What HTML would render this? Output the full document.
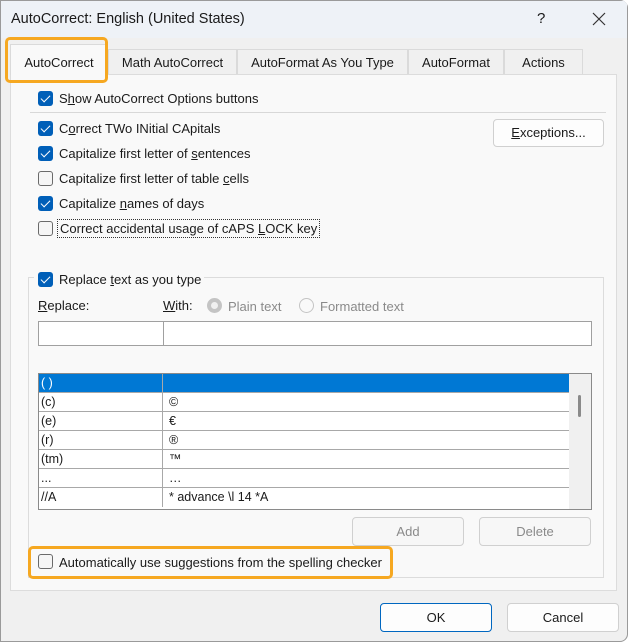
<!DOCTYPE html>
<html><head><style>
*{box-sizing:border-box;margin:0;padding:0}
body{width:630px;height:643px;background:#fff;font-family:"Liberation Sans",sans-serif;font-size:12.5px;color:#1a1a1a;position:relative;overflow:hidden}
.win{position:absolute;left:0;top:0;width:628px;height:642px;background:#f0f0f0;box-shadow:inset 0 0 0 1px #9a9a9a;border-radius:0 8px 8px 0;overflow:hidden}
.title{position:absolute;left:1px;top:1px;width:626px;height:37px;background:#eef2f7}
.abs{position:absolute}
.tab{position:absolute;top:49px;height:26px;border:1px solid #dadada;border-bottom:none;background:#f0f0f0;text-align:center;line-height:26px;font-size:13px}
.panel{position:absolute;left:10px;top:74px;width:607px;height:517px;background:#f9f9f9;border:1px solid #dcdcdc}
.cb{position:absolute;width:15px;height:15px;border-radius:3px;background:#005fb8}
.cb::after{content:"";position:absolute;left:5px;top:2px;width:4px;height:8px;border:solid #fff;border-width:0 1.5px 1.5px 0;transform:rotate(45deg)}
.cb.off{background:#f5f5f5;border:1px solid #6a6a6a}
.cb.off::after{display:none}
.lbl{position:absolute;font-size:13px;white-space:nowrap}
.btn{position:absolute;background:#fdfdfd;border:1px solid #d0d0d0;border-radius:4px;text-align:center;font-size:13px}
.row{position:absolute;left:39px;width:530px;height:19px;border-bottom:1px solid #a8a8a8;background:#fff;font-size:12.5px;line-height:18px}
.row span{position:absolute;left:2px}
.row b{position:absolute;left:130px;font-weight:normal}
.row::before{content:"";position:absolute;left:123px;top:0;height:19px;border-left:1px solid #a8a8a8}
u{text-decoration:underline}
</style></head><body>
<div class="win">
<div class="title"></div>
<div class="abs" style="left:11px;top:11px;font-size:14.5px">AutoCorrect: English (United States)</div>
<div class="abs" style="left:537px;top:10px;font-size:15px">?</div>
<svg class="abs" style="left:592px;top:12px" width="14" height="14"><path d="M1 1L13 13M13 1L1 13" stroke="#333" stroke-width="1.2"/></svg>

<div class="tab" style="left:108px;width:129px">Math AutoCorrect</div>
<div class="tab" style="left:237px;width:171px">AutoFormat As You Type</div>
<div class="tab" style="left:408px;width:96px">AutoFormat</div>
<div class="tab" style="left:504px;width:79px">Actions</div>
<div class="panel"></div>
<div class="tab" style="left:10px;top:44px;height:31px;width:98px;background:#f9f9f9;line-height:36px">AutoCorrect</div>
<div class="abs" style="left:5px;top:37px;width:103px;height:46px;border:3px solid #f6a821;border-radius:5px"></div>

<div class="cb" style="left:38px;top:91px"></div><div class="lbl" style="left:59px;top:91px">S<u>h</u>ow AutoCorrect Options buttons</div>
<div class="abs" style="left:30px;top:112px;width:576px;border-top:1px solid #d8d8d8"></div>
<div class="cb" style="left:38px;top:121px"></div><div class="lbl" style="left:59px;top:121px">C<u>o</u>rrect TWo INitial CApitals</div>
<div class="cb" style="left:38px;top:146px"></div><div class="lbl" style="left:59px;top:146px">Capitalize first letter of <u>s</u>entences</div>
<div class="cb off" style="left:38px;top:171px"></div><div class="lbl" style="left:59px;top:171px">Capitalize first letter of table <u>c</u>ells</div>
<div class="cb" style="left:38px;top:196px"></div><div class="lbl" style="left:59px;top:196px">Capitalize <u>n</u>ames of days</div>
<div class="cb off" style="left:38px;top:221px"></div><div class="lbl" style="left:57px;top:219px;border:1px dotted #333;padding:1px 2px">Correct accidental usage of cAPS <u>L</u>OCK key</div>
<div class="btn" style="left:493px;top:119px;width:111px;height:28px;line-height:26px"><u>E</u>xceptions...</div>

<div class="abs" style="left:28px;top:277px;width:576px;height:301px;border:1px solid #dcdcdc"></div>
<div class="abs" style="left:34px;top:270px;width:170px;height:18px;background:#f9f9f9"></div>
<div class="cb" style="left:38px;top:272px"></div><div class="lbl" style="left:59px;top:272px">Replace <u>t</u>ext as you type</div>
<div class="lbl" style="left:38px;top:298px"><u>R</u>eplace:</div>
<div class="lbl" style="left:163px;top:298px"><u>W</u>ith:</div>
<div class="abs" style="left:207px;top:298px;width:15px;height:15px;border-radius:50%;background:#c4c4c4"><div class="abs" style="left:4px;top:4px;width:7px;height:7px;border-radius:50%;background:#f0f0f0"></div></div>
<div class="lbl" style="left:228px;top:299px;color:#8a8a8a">Plain text</div>
<div class="abs" style="left:299px;top:298px;width:15px;height:15px;border-radius:50%;border:1px solid #c4c4c4"></div>
<div class="lbl" style="left:320px;top:299px;color:#8a8a8a">Formatted text</div>
<div class="abs" style="left:38px;top:321px;width:126px;height:25px;background:#fff;border:1px solid #a0a0a0"></div>
<div class="abs" style="left:163px;top:321px;width:429px;height:25px;background:#fff;border:1px solid #a0a0a0"></div>

<div class="abs" style="left:38px;top:373px;width:554px;height:137px;background:#fff;border:1px solid #8a8a8a"></div>
<div class="row" style="top:374px;background:#0078d4;color:#fff"><span>( )</span></div>
<div class="row" style="top:393px"><span>(c)</span><b>©</b></div>
<div class="row" style="top:412px"><span>(e)</span><b>€</b></div>
<div class="row" style="top:431px"><span>(r)</span><b>®</b></div>
<div class="row" style="top:450px"><span>(tm)</span><b>™</b></div>
<div class="row" style="top:469px"><span>...</span><b>…</b></div>
<div class="row" style="top:488px;border-bottom:none"><span>//A</span><b>* advance \l 14 *A</b></div>
<div class="abs" style="left:569px;top:374px;width:22px;height:135px;background:#f0f0f0"></div>
<div class="abs" style="left:578px;top:395px;width:3px;height:22px;background:#8a8a8a;border-radius:2px"></div>

<div class="btn" style="left:352px;top:517px;width:112px;height:29px;line-height:28px;color:#8a8a8a;background:#f7f7f7">Add</div>
<div class="btn" style="left:479px;top:517px;width:112px;height:29px;line-height:28px;color:#8a8a8a;background:#f7f7f7">Delete</div>

<div class="cb off" style="left:38px;top:554px"></div><div class="lbl" style="left:59px;top:555px">Automatically use suggestions from the spelling checker</div>
<div class="abs" style="left:28px;top:546px;width:365px;height:33px;border:3px solid #f6a821;border-radius:5px"></div>

<div class="btn" style="left:380px;top:603px;width:112px;height:29px;line-height:28px;border-color:#0067c0">OK</div>
<div class="btn" style="left:507px;top:603px;width:112px;height:29px;line-height:28px">Cancel</div>
</div>
</body></html>
